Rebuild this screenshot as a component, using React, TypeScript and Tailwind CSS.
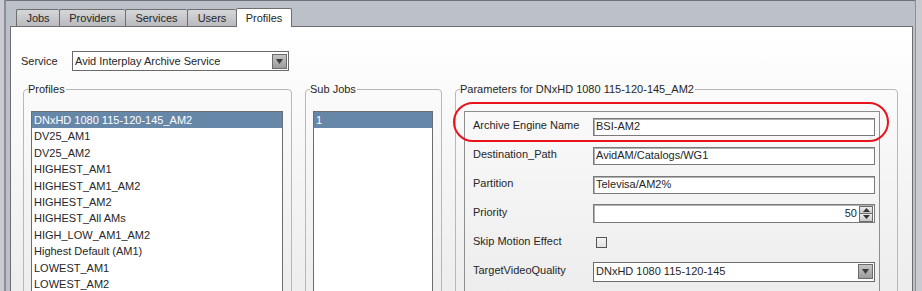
import React from "react"

const profiles = [
  "DNxHD 1080 115-120-145_AM2",
  "DV25_AM1",
  "DV25_AM2",
  "HIGHEST_AM1",
  "HIGHEST_AM1_AM2",
  "HIGHEST_AM2",
  "HIGHEST_All AMs",
  "HIGH_LOW_AM1_AM2",
  "Highest Default (AM1)",
  "LOWEST_AM1",
  "LOWEST_AM2",
]

const tabs = ["Jobs", "Providers", "Services", "Users", "Profiles"]

function DropButton() {
  return (
    <div className="flex h-[15px] w-[15px] items-center justify-center border border-[#6b6b6b] bg-gradient-to-b from-[#c4c4c4] to-[#9c9c9c]">
      <svg width="7" height="5" viewBox="0 0 7 5">
        <path d="M0 0h7L3.5 5z" fill="#3a3a3a" />
      </svg>
    </div>
  )
}

function TextField({ value, right }: { value: string; right?: boolean }) {
  return (
    <div
      className={`flex h-[18px] w-[282px] items-center border border-[#7a7a7a] bg-white px-[2px] shadow-[inset_1px_1px_0_#b0b0b0] ${
        right ? "justify-end" : ""
      }`}
    >
      {value}
    </div>
  )
}

function Row({ label, children }: { label: string; children: React.ReactNode }) {
  return (
    <div className="flex h-[29px] items-center">
      <div className="w-[120px] pb-[3px]">{label}</div>
      {children}
    </div>
  )
}

export default function App() {
  return (
    <div className="relative flex h-[291px] w-[922px] overflow-hidden bg-[#bcc0c9] font-['Liberation_Sans',Arial,sans-serif] text-[11px] text-[#262626]">
      <div className="w-[4px] bg-[#c9cbd1]" />
      <div className="w-[2px] bg-[#8b8e97]" />
      <div className="flex w-[909px] flex-col border-t border-[#6f727b] pt-[7px]">
        <div className="ml-[10px] flex h-[18px] items-end">
          {tabs.map((t) => {
            const active = t === "Profiles"
            return (
              <div
                key={t}
                className={
                  active
                    ? "relative z-10 -mb-px flex h-[19px] w-[56px] items-center justify-center rounded-t-[2px] border border-b-0 border-[#6e6e6e] bg-white"
                    : `flex h-[17px] items-center justify-center rounded-t-[2px] border border-r-0 border-b-0 border-[#6e6e6e] bg-gradient-to-b from-[#d6d7da] to-[#b9babe] ${
                        t === "Jobs" ? "w-[43px]" : t === "Providers" ? "w-[66px]" : t === "Services" ? "w-[62px]" : "w-[49px]"
                      }`
                }
              >
                {t}
              </div>
            )
          })}
        </div>
        <div className="ml-[4px] h-[300px] w-[903px] border border-[#6e6e6e] bg-gradient-to-b from-white to-[#ebebeb]">
          <div className="mt-[24px] flex items-center pl-[10px]">
            <div className="w-[51px]">Service</div>
            <div className="flex h-[20px] w-[217px] items-center justify-between border border-[#6a6a6a] bg-white pl-[2px] pr-[1px]">
              <span>Avid Interplay Archive Service</span>
              <DropButton />
            </div>
          </div>

          <div className="mt-[11px] flex items-start pl-[12px]">
            <fieldset className="h-[240px] w-[269px] rounded-[4px] border border-[#b8b8b8] p-0">
              <legend className="ml-[4px] pr-[1px] leading-[14px]">Profiles</legend>
              <div className="pl-[7px] pt-[15px]">
                <div className="h-[200px] w-[252px] border border-[#6d6d6d] bg-white">
                  {profiles.map((p, i) => (
                    <div
                      key={p}
                      className={`h-[16.4px] pl-[2px] leading-[16.4px] ${i === 0 ? "bg-[#6787a8] text-white" : ""}`}
                    >
                      {p}
                    </div>
                  ))}
                </div>
              </div>
            </fieldset>

            <fieldset className="ml-[13px] h-[240px] w-[137px] rounded-[4px] border border-[#b8b8b8] p-0">
              <legend className="ml-[4px] pr-[1px] leading-[14px]">Sub Jobs</legend>
              <div className="pl-[7px] pt-[15px]">
                <div className="h-[200px] w-[120px] border border-[#6d6d6d] bg-white">
                  <div className="h-[16.4px] bg-[#6787a8] pl-[2px] leading-[16.4px] text-white">1</div>
                </div>
              </div>
            </fieldset>

            <fieldset className="ml-[13px] h-[240px] w-[443px] rounded-[4px] border border-[#b8b8b8] p-0">
              <legend className="ml-[4px] pr-[1px] leading-[14px]">Parameters for DNxHD 1080 115-120-145_AM2</legend>
              <div className="pl-[8px] pt-[15px]">
                <div className="h-[200px] w-[416px] border border-[#8e8e8e] pl-[8px]">
                  <Row label="Archive Engine Name">
                    <TextField value="BSI-AM2" />
                  </Row>
                  <Row label="Destination_Path">
                    <TextField value="AvidAM/Catalogs/WG1" />
                  </Row>
                  <Row label="Partition">
                    <TextField value="Televisa/AM2%" />
                  </Row>
                  <Row label="Priority">
                    <div className="flex h-[19px] w-[282px] items-center justify-end border border-[#7a7a7a] bg-white pr-[1px] shadow-[inset_1px_1px_0_#b0b0b0]">
                      <span className="mr-[2px]">50</span>
                      <div className="flex flex-col">
                        <div className="flex h-[8px] w-[14px] items-center justify-center border border-[#6b6b6b] bg-gradient-to-b from-[#eeeeee] to-[#c8c8c8]">
                          <svg width="7" height="4" viewBox="0 0 7 4">
                            <path d="M0 4h7L3.5 0z" fill="#333" />
                          </svg>
                        </div>
                        <div className="flex h-[8px] w-[14px] items-center justify-center border border-t-0 border-[#6b6b6b] bg-gradient-to-b from-[#eeeeee] to-[#c8c8c8]">
                          <svg width="7" height="4" viewBox="0 0 7 4">
                            <path d="M0 0h7L3.5 4z" fill="#333" />
                          </svg>
                        </div>
                      </div>
                    </div>
                  </Row>
                  <Row label="Skip Motion Effect">
                    <div className="ml-[3px] h-[11px] w-[11px] border border-[#555] bg-gradient-to-b from-[#f4f4f4] to-[#e2e2e2]" />
                  </Row>
                  <Row label="TargetVideoQuality">
                    <div className="flex h-[20px] w-[282px] items-center justify-between border border-[#6a6a6a] bg-white pl-[2px] pr-[1px]">
                      <span>DNxHD 1080 115-120-145</span>
                      <DropButton />
                    </div>
                  </Row>
                </div>
              </div>
            </fieldset>
          </div>
        </div>
      </div>
      <div className="w-[1px] bg-[#8b8e97]" />
      <div className="w-[6px] bg-[#c9cbd1]" />

      <div className="pointer-events-none absolute left-[453px] top-[102px] h-[40px] w-[436px] rounded-[20px] border-2 border-[#e8141c]" />
    </div>
  )
}
